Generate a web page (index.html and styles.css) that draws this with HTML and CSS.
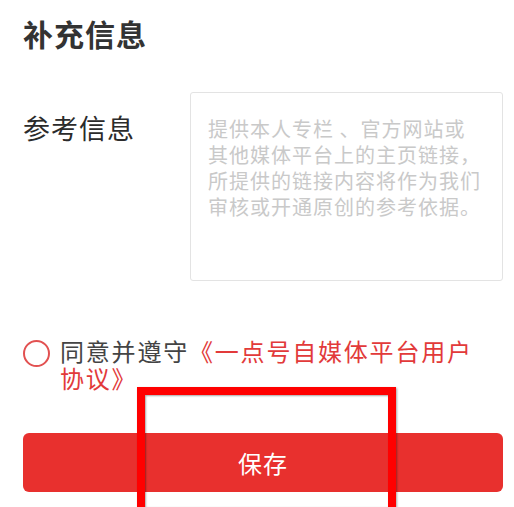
FILE: index.html
```html
<!DOCTYPE html>
<html lang="zh-CN">

<head>
    <meta charset="UTF-8">
    <meta name="viewport" content="width=device-width, initial-scale=1.0">
    <title>补充信息</title>
    <link rel="stylesheet" href="styles.css">
</head>

<body>
    <main class="page">
        <h1 class="title">补充信息</h1>

        <div class="field">
            <label class="field-label">参考信息</label>
            <div class="field-box">
                <p class="placeholder">提供本人专栏&nbsp;、官方网站或<br>其他媒体平台上的主页链接，<br>所提供的链接内容将作为我们<br>审核或开通原创的参考依据。</p>
            </div>
        </div>

        <div class="agree">
            <span class="radio"></span>
            <p class="agree-text">同意并遵守<span class="link">《一点号自媒体平台用户协议》</span></p>
        </div>

        <button class="btn-save">保存</button>
    </main>

    <!-- annotation frame -->
    <div class="mark"></div>
</body>

</html>
```

FILE: styles.css
```css
* {
    margin: 0;
    padding: 0;
    box-sizing: border-box;
}

body {
    font-family: "Noto Sans CJK SC", "Noto Sans", sans-serif;
    background: #fff;
    color: #333;
    width: 514px;
    height: 507px;
    overflow: hidden;
    position: relative;
}

.page {
    padding: 15px 11px 0 23px;
}

.title {
    font-size: 30px;
    font-weight: 700;
    line-height: 36px;
    letter-spacing: 1px;
    color: #333;
}

.field {
    display: flex;
    margin-top: 41px;
}

.field-label {
    width: 167px;
    font-size: 27px;
    line-height: 36px;
    letter-spacing: 1px;
    color: #2b2b2b;
    padding-top: 18px;
}

.field-box {
    width: 313px;
    height: 189px;
    border: 1px solid #e3e3e3;
    border-radius: 3px;
    padding: 23px 0 0 17px;
}

.placeholder {
    font-size: 20px;
    line-height: 26px;
    letter-spacing: 1px;
    color: #c9c9c9;
}

.agree {
    display: flex;
    align-items: flex-start;
    margin-top: 56px;
}

.radio {
    flex: none;
    width: 27px;
    height: 27px;
    border: 2px solid #e25151;
    border-radius: 50%;
    margin-top: 3px;
}

.agree-text {
    width: 430px;
    margin-left: 10px;
    font-size: 24px;
    line-height: 27px;
    letter-spacing: 1.8px;
    color: #444;
}

.link {
    color: #e23a3a;
}

.btn-save {
    display: block;
    width: 480px;
    height: 59px;
    margin-top: 42px;
    border: none;
    border-radius: 6px;
    background: #e8302e;
    color: #fff;
    font-family: inherit;
    font-size: 24px;
    letter-spacing: 1px;
}

.mark {
    position: absolute;
    left: 137px;
    top: 387px;
    width: 259px;
    height: 120px;
    border: 8px solid #ff0000;
    border-bottom: none;
    box-shadow: 1px 1px 2px rgba(0, 0, 0, 0.35), inset 1px 1px 2px rgba(0, 0, 0, 0.35);
}
```
